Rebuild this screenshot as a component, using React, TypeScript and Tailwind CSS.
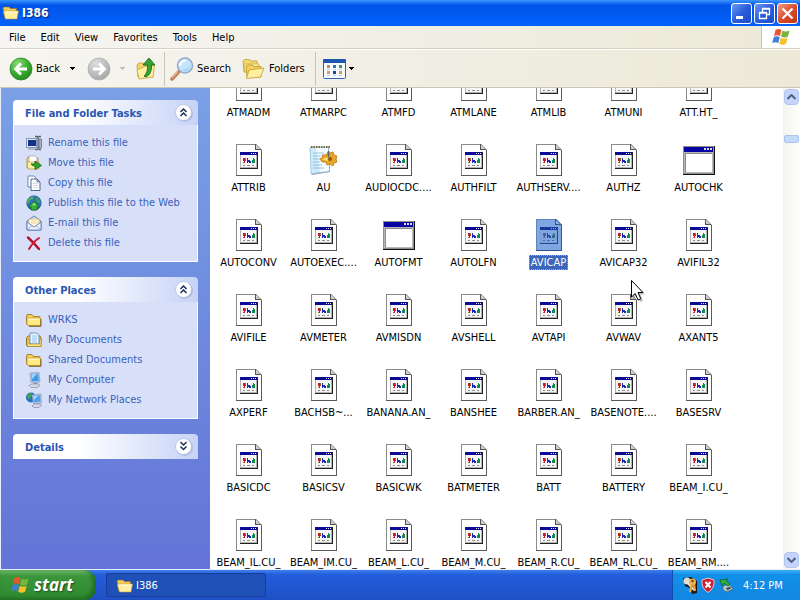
import { useState, type ReactNode } from "react"
import { clsx } from "clsx"

type FileKind = "doc" | "window" | "pad"

const fileNames = [
  "ATMADM", "ATMARPC", "ATMFD", "ATMLANE", "ATMLIB", "ATMUNI", "ATT.HT_",
  "ATTRIB", "AU", "AUDIOCDC....", "AUTHFILT", "AUTHSERV....", "AUTHZ", "AUTOCHK",
  "AUTOCONV", "AUTOEXEC....", "AUTOFMT", "AUTOLFN", "AVICAP", "AVICAP32", "AVIFIL32",
  "AVIFILE", "AVMETER", "AVMISDN", "AVSHELL", "AVTAPI", "AVWAV", "AXANT5",
  "AXPERF", "BACHSB~...", "BANANA.AN_", "BANSHEE", "BARBER.AN_", "BASENOTE....", "BASESRV",
  "BASICDC", "BASICSV", "BASICWK", "BATMETER", "BATT", "BATTERY", "BEAM_I.CU_",
  "BEAM_IL.CU_", "BEAM_IM.CU_", "BEAM_L.CU_", "BEAM_M.CU_", "BEAM_R.CU_", "BEAM_RL.CU_", "BEAM_RM....",
]

const kinds: Record<string, FileKind> = { AU: "pad", AUTOCHK: "window", AUTOFMT: "window" }

function DocIcon({ selected }: { selected: boolean }) {
  const paper = selected ? "#7ea6e0" : "#ffffff"
  return (
    <svg width="32" height="32" viewBox="0 0 32 32" shapeRendering="crispEdges">
      <path d="M3 0H23L29 6V32H3Z" fill={paper} />
      <path d="M3 0H23V1H4V31H3Z" fill={selected ? "#6684b4" : "#8a8a8a"} />
      <path d="M28 6H29V32H3V31H28Z" fill={selected ? "#35558c" : "#5a5a5a"} />
      <path d="M22 0H23V5H28V6H22Z" fill={selected ? "#35558c" : "#555555"} />
      <path d="M23 0L29 6H28L23 1Z" fill={selected ? "#35558c" : "#666666"} shapeRendering="auto" />
      <path d="M23 2L26.500 5H23Z" fill={selected ? "#93b5e8" : "#c8c8c8"} shapeRendering="auto" />
      <rect x="7" y="8" width="18" height="17" fill={selected ? "#254a8c" : "#222222"} />
      <rect x="7" y="8" width="17" height="16" fill={selected ? "#7b9cd0" : "#b4b4b4"} />
      <rect x="8" y="11" width="15" height="12" fill={selected ? "#7ea6e0" : "#f6f6f6"} />
      <rect x="7" y="8" width="17" height="3" fill={selected ? "#163a9c" : "#0a0a96"} />
      <path d="M18 9H19V10H18ZM20 9H21V10H20ZM22 9H23V10H22Z" fill={selected ? "#9dbcf0" : "#e8e8e8"} />
      <path d="M10 14H13V17H12V19H11V17H10Z" fill={selected ? "#4a5f9c" : "#c41a2a"} />
      <path d="M12 14H13V16H12ZM10 18H11V19H10Z" fill={selected ? "#4a5f9c" : "#8a7a10"} />
      <path d="M14 14H15V16H17V17H18V19H16V18H15V19H14Z" fill={selected ? "#2349a0" : "#1c26b8"} />
      <path d="M20 14H21V15H22V19H19V16H20Z" fill={selected ? "#2f6a8c" : "#0e8a4a"} />
      <path d="M10 21H12V22H10ZM14 21H17V22H14ZM19 21H21V22H19Z" fill={selected ? "#4a6eae" : "#8c8c8c"} />
    </svg>
  )
}

function WindowIcon() {
  return (
    <svg width="32" height="32" viewBox="0 0 32 32" shapeRendering="crispEdges">
      <rect x="0" y="2" width="32" height="29" fill="#111111" />
      <rect x="0" y="2" width="31" height="28" fill="#8e8e8e" />
      <rect x="1" y="3" width="29" height="5" fill="#0804a4" />
      <path d="M21 4H23V6H21ZM24 4H26V6H24ZM27 4H29V6H27Z" fill="#dcdcdc" />
      <rect x="1" y="8" width="29" height="21" fill="#b8b8b8" />
      <rect x="2" y="9" width="27" height="19" fill="#8a8a8a" />
      <rect x="3" y="10" width="26" height="18" fill="#ffffff" />
    </svg>
  )
}

function PadIcon() {
  return (
    <svg width="32" height="32" viewBox="0 0 32 32">
      <path d="M2 3L21 3L22 28L4 31Z" fill="#9aa6b0" />
      <path d="M2 3L20 3L21 27L3 30Z" fill="#cfeafb" stroke="#7fb4d6" strokeWidth="0.600" />
      <path d="M8 4L20 4L21 27L12 28Z" fill="#f3fbff" />
      <path d="M5 9H16M5 12H13M5 15H12M5 18H12M5 21H14M5 24H16" stroke="#86b6de" strokeWidth="0.800" />
      <path d="M3 3H22" stroke="#7d6a3c" strokeWidth="2" strokeDasharray="1.500 1" />
      <path d="M20 8L22 9L25 8L26 11L29 12L28 15L29 18L26 19L25 22L22 20L19 21L18 18L14 18L12 15L15 13L14 11L18 11Z" fill="#e8a526" stroke="#b87a14" strokeWidth="0.800" />
      <circle cx="22" cy="15" r="2" fill="#8a5c14" />
      <path d="M20.500 7V13" stroke="#5b6470" strokeWidth="1.500" />
      <path d="M14 15.500L19 13L20 17Z" fill="#ffda70" />
    </svg>
  )
}

function FolderIcon() {
  return (
    <svg width="16" height="16" viewBox="0 0 16 16">
      <path d="M0.500 4Q0.500 2.500 2 2.500H6L7.500 4.500H13Q14 4.500 14 5.500V13.500H2.500L0.500 12Z" fill="#f4d166" stroke="#a9821f" />
      <path d="M1 6.500Q1 6 2 6H13.500Q14.500 6 14.500 7V13.500H3.500Q1.500 13.500 1 12Z" fill="#fdeb84" stroke="#b8922c" strokeWidth="0.700" />
      <path d="M3 14.300H15V7" fill="none" stroke="#6f5414" strokeWidth="0.900" />
      <path d="M2 7.200H13" stroke="#fffbd8" />
    </svg>
  )
}

function OpenFolder() {
  return (
    <svg width="18" height="16" viewBox="0 0 18 16" className="shrink-0">
      <path d="M1 3L2 2H7L8.500 3.500H14.500V13H3Z" fill="#f3cc5c" stroke="#96701a" strokeWidth="0.600" />
      <path d="M2 6H16.500L15 14H3.500L1.500 7Z" fill="#fff0a2" stroke="#c89b30" strokeWidth="0.600" />
      <path d="M3.500 7H15.500" stroke="#fffde4" />
    </svg>
  )
}

function FlagIcon({ size }: { size: number }) {
  return (
    <svg width={size} height={size} viewBox="0 0 20 20" className="shrink-0">
      <path d="M4.500 3Q7.500 1 10.500 3L9 9Q6 7.500 3 9Z" fill="#e9562c" />
      <path d="M11.500 3.500Q14.500 5.500 18.500 3.500L17 9.500Q13.500 11.500 10 9.500Z" fill="#76b63a" />
      <path d="M2.800 10Q5.800 8.500 8.800 10.200L7.200 16Q4.200 14.500 1.200 16Z" fill="#3f7fdc" />
      <path d="M9.800 10.700Q13.300 12.500 16.700 10.700L15 16.800Q11.500 18.800 8.200 16.800Z" fill="#f6c02c" />
    </svg>
  )
}

function RenameIcon() {
  return (
    <svg width="16" height="16" viewBox="0 0 16 16">
      <rect x="0.500" y="3.500" width="10" height="9" fill="#dfe6f2" stroke="#8898b4" />
      <rect x="2" y="5" width="8" height="6" fill="#12308c" />
      <path d="M9 1.500H11L12 2.500L13 1.500H15M9 14.500H11L12 13.500L13 14.500H15M12 2.500V13.500" stroke="#5a6474" strokeWidth="1.300" fill="none" />
      <rect x="13" y="4" width="2.500" height="9" fill="#a8b2c2" stroke="#48546a" strokeWidth="0.600" />
      <path d="M2 14H9" stroke="#7d8cab" />
    </svg>
  )
}

function MoveIcon() {
  return (
    <svg width="16" height="16" viewBox="0 0 16 16">
      <path d="M1 3L2 2H6L7 3H12V13H1Z" fill="#f7d96c" stroke="#a9821f" strokeWidth="0.700" />
      <path d="M3 1H9L11 3V8H3Z" fill="#ffffff" stroke="#8694ac" strokeWidth="0.600" />
      <path d="M1 7H13V14H2Z" fill="#fff0a0" stroke="#b8922c" strokeWidth="0.700" />
      <path d="M5 9Q6 11 9 11V14.500L15.500 10.500L9 6V8.500Q8 9 5 9Z" fill="#2fa52c" stroke="#145f14" strokeWidth="0.800" />
    </svg>
  )
}

function CopyIcon() {
  return (
    <svg width="16" height="16" viewBox="0 0 16 16">
      <path d="M2 1H8L10 3V12H2Z" fill="#ffffff" stroke="#5f7ba5" strokeWidth="0.900" />
      <path d="M5 4H11L14 7V15.500H5Z" fill="#ffffff" stroke="#3f5b86" strokeWidth="0.900" />
      <path d="M11 4V7H14Z" fill="#9db7dc" stroke="#3f5b86" strokeWidth="0.600" />
      <path d="M7 8.500H12M7 10.500H12M7 12.500H12" stroke="#c5daf2" strokeWidth="0.900" />
    </svg>
  )
}

function GlobeIcon() {
  return (
    <svg width="16" height="16" viewBox="0 0 16 16">
      <circle cx="8" cy="8" r="7.300" fill="#2c74bc" stroke="#1d4a80" strokeWidth="0.500" />
      <path d="M2 4Q5 1 8 1.500L7 4L4 5L3 8L1 8Z" fill="#4fb054" />
      <path d="M10 2Q14 4 14.800 8L12 8L10 5Z" fill="#3c9f58" />
      <path d="M8 6L13.500 12L11 12V15H5V12H2.500Z" fill="#37b338" stroke="#135e1b" strokeWidth="0.700" />
      <path d="M8 8L10 10.500L8 10L6 10.500Z" fill="#b4f0a4" />
    </svg>
  )
}

function MailIcon() {
  return (
    <svg width="16" height="16" viewBox="0 0 16 16">
      <path d="M1 6L8 1L15 6V15H1Z" fill="#d7e5fb" stroke="#5874a6" strokeWidth="0.900" />
      <path d="M3 4H13V9L8 12L3 9Z" fill="#fff9df" stroke="#d2a94e" strokeWidth="0.600" />
      <path d="M5 6H11M5 8H11" stroke="#e6cb8e" strokeWidth="0.800" />
      <path d="M1 7L8 12L15 7V15H1Z" fill="#e9f2ff" stroke="#5874a6" strokeWidth="0.800" />
      <path d="M1 15L6 10.500M15 15L10 10.500" stroke="#7f9ac6" strokeWidth="0.800" />
    </svg>
  )
}

function DeleteIcon() {
  return (
    <svg width="16" height="16" viewBox="0 0 16 16">
      <path d="M2 2.500Q7 7 13 14" stroke="#b3122f" strokeWidth="2.400" fill="none" strokeLinecap="round" />
      <path d="M13 3Q7 7 3 14" stroke="#cc1b36" strokeWidth="2" fill="none" strokeLinecap="round" />
    </svg>
  )
}

function DocumentsIcon() {
  return (
    <svg width="16" height="16" viewBox="0 0 16 16">
      <path d="M0.500 6L2 4H14L15 6V14.500H1.500L0.500 13Z" fill="#f3cc5c" stroke="#8f6a16" strokeWidth="0.900" />
      <path d="M4 1H10.500L13 3V12H4Z" fill="#e4f3ff" stroke="#5f86b4" strokeWidth="0.800" />
      <path d="M6 4H11M6 6H11M6 8H11M6 10H11" stroke="#8fc3ec" strokeWidth="0.900" />
      <path d="M1 7H3V12H13.500V7H15V14.500H1.500Z" fill="#fbe58a" stroke="#a47d1f" strokeWidth="0.600" />
    </svg>
  )
}

function ComputerIcon() {
  return (
    <svg width="16" height="16" viewBox="0 0 16 16">
      <path d="M4 1L13 0.500L14 10L5 10.500Z" fill="#b9c8de" stroke="#8a9cc0" strokeWidth="0.700" />
      <path d="M5 2L12 1.700L12.800 8.700L6 9.200Z" fill="#3f98e8" />
      <path d="M5.200 2.300L11 2L6 7Z" fill="#9cd4ff" />
      <path d="M8 10.500H11L11.500 12.500H7.500Z" fill="#8b9ab4" />
      <path d="M3 13.500L6 12H13L14 13.500L11 15.500H5Z" fill="#d4dbe8" stroke="#75809a" strokeWidth="0.600" />
    </svg>
  )
}

function NetworkIcon() {
  return (
    <svg width="16" height="16" viewBox="0 0 16 16">
      <circle cx="5" cy="5.500" r="5" fill="#2b70b8" />
      <path d="M1 4Q3 0.500 6 1L5 4L3 8Z" fill="#40a84b" />
      <path d="M6 3L15 2L15.500 11L7.500 11.500Z" fill="#b9c8de" stroke="#8a9cc0" strokeWidth="0.700" />
      <path d="M7 4L14 3.200L14.400 9.500L8.200 10.200Z" fill="#4aa3ec" />
      <path d="M7.200 4.200L12 3.700L8 8Z" fill="#a5dafe" />
      <path d="M6 14L8.500 12H14L15.500 13.500L12.500 15.500H8Z" fill="#d4dbe8" stroke="#75709a" strokeWidth="0.600" />
    </svg>
  )
}

function NavCircle({ forward = false }: { forward?: boolean }) {
  return (
    <svg width="24" height="24" viewBox="0 0 24 24" className="shrink-0">
      <defs>
        <radialGradient id={forward ? "navFwd" : "navBack"} cx="0.350" cy="0.250" r="0.850">
          <stop offset="0" stopColor={forward ? "#dedede" : "#8cdc74"} />
          <stop offset="0.550" stopColor={forward ? "#bdbdbd" : "#3bab31"} />
          <stop offset="1" stopColor={forward ? "#a3a3a3" : "#1f821d"} />
        </radialGradient>
      </defs>
      <circle cx="12" cy="12" r="11" fill={forward ? "url(#navFwd)" : "url(#navBack)"} stroke={forward ? "#b0b0b0" : "#2d8429"} strokeWidth="0.800" />
      <path d={forward ? "M6 12H17M12 6.500L17.500 12L12 17.500" : "M18 12H7M12 6.500L6.500 12L12 17.500"} stroke="#ffffff" strokeWidth="2.800" fill="none" />
    </svg>
  )
}

function UpFolderIcon() {
  return (
    <svg width="22" height="24" viewBox="0 0 22 24" className="shrink-0">
      <path d="M2 8L4 6H8L10 8H18V20H3Z" fill="#f4d46a" stroke="#c1982f" strokeWidth="0.800" />
      <path d="M2 13L11 9L19.500 8L18 20L4 22Z" fill="#fff0a4" stroke="#c9a136" strokeWidth="0.800" />
      <path d="M9 19Q13 16 12.500 8H8L14 1L20 8H16.500Q17 17 11 20Z" fill="#37a532" stroke="#176a1a" strokeWidth="0.900" />
    </svg>
  )
}

function SearchIcon() {
  return (
    <svg width="24" height="24" viewBox="0 0 24 24" className="shrink-0">
      <path d="M2 22L9 14.500" stroke="#c07a52" strokeWidth="3.400" strokeLinecap="round" />
      <path d="M2 21L8 14.500" stroke="#edb896" strokeWidth="1.200" />
      <circle cx="15" cy="8.500" r="7.500" fill="#c4e5fb" stroke="#90a8cc" strokeWidth="1.500" />
      <path d="M10 8Q11 4 15 3.500" stroke="#ffffff" strokeWidth="2.200" fill="none" strokeLinecap="round" />
      <path d="M12 12Q17 14 20 8Q20 14 15 14.500Z" fill="#9fd0f2" />
    </svg>
  )
}

function FoldersIcon() {
  return (
    <svg width="24" height="22" viewBox="0 0 24 22" className="shrink-0">
      <path d="M1 3L3 1.500H7L9 3H15V14H2Z" fill="#f4d873" stroke="#c19a35" strokeWidth="0.800" />
      <path d="M2 6H17L15 14H3Z" fill="#fdeea4" stroke="#c9a136" strokeWidth="0.600" />
      <path d="M4 8L6 7H10L12 8.500H19V19H5Z" fill="#f3d25e" stroke="#b88f2a" strokeWidth="0.800" />
      <path d="M7 12L22 10L18.500 19L4.500 20.500Z" fill="#fff0a0" stroke="#c59c31" strokeWidth="0.800" />
    </svg>
  )
}

function ViewsIcon() {
  return (
    <svg width="23" height="20" viewBox="0 0 23 20" className="shrink-0">
      <rect x="0.500" y="0.500" width="22" height="19" rx="1" fill="#f5faff" stroke="#2c64b4" />
      <rect x="0" y="0" width="23" height="4" rx="1" fill="#1d56ac" />
      <rect x="4" y="6" width="3" height="3" fill="#c9837a" />
      <rect x="10" y="6" width="3" height="3" fill="#3c6cb8" />
      <rect x="16" y="6" width="3" height="3" fill="#3c9a4c" />
      <rect x="4" y="12" width="3" height="3" fill="#e29a62" />
      <rect x="10" y="12" width="3" height="3" fill="#1a468c" />
      <rect x="16" y="12" width="3" height="3" fill="#d79a4c" />
      <path d="M4 10.500H7M10 10.500H13M16 10.500H19M4 16.500H7M10 16.500H13M16 16.500H19" stroke="#c4cede" />
    </svg>
  )
}

function Caret({ muted = false }: { muted?: boolean }) {
  return (
    <svg width="5" height="3" viewBox="0 0 5 3" className="shrink-0" shapeRendering="crispEdges">
      <path d="M0 0H5V1H4V2H3V3H2V2H1V1H0Z" fill={muted ? "#bdbdb4" : "#000000"} />
    </svg>
  )
}

function Chevrons({ down = false }: { down?: boolean }) {
  return (
    <svg width="20" height="20" viewBox="0 0 20 20">
      <circle cx="10.500" cy="10.500" r="8.500" fill="#9ba9d6" opacity="0.600" />
      <circle cx="9.500" cy="9.500" r="8" fill="#ffffff" stroke="#b3bde0" strokeWidth="0.800" />
      <path
        d={down ? "M6.500 5L9.500 8L12.500 5M6.500 9.500L9.500 12.500L12.500 9.500" : "M6.500 9L9.500 6L12.500 9M6.500 13L9.500 10L12.500 13"}
        stroke="#1c2c5c"
        strokeWidth="1.500"
        fill="none"
      />
    </svg>
  )
}

function ScrollButton({ down = false }: { down?: boolean }) {
  return (
    <button
      type="button"
      aria-label={down ? "Scroll down" : "Scroll up"}
      className="flex h-4 w-full items-center justify-center rounded-sm border border-[#b2c4f0] bg-[#c5d4fb]"
    >
      <svg width="9" height="6" viewBox="0 0 9 6">
        <path d={down ? "M0.500 1L4.500 5L8.500 1" : "M0.500 5L4.500 1L8.500 5"} stroke="#4d6185" strokeWidth="2" fill="none" />
      </svg>
    </button>
  )
}

type PanelItem = { label: string; icon: ReactNode }

const tasks: PanelItem[] = [
  { label: "Rename this file", icon: <RenameIcon /> },
  { label: "Move this file", icon: <MoveIcon /> },
  { label: "Copy this file", icon: <CopyIcon /> },
  { label: "Publish this file to the Web", icon: <GlobeIcon /> },
  { label: "E-mail this file", icon: <MailIcon /> },
  { label: "Delete this file", icon: <DeleteIcon /> },
]

const places: PanelItem[] = [
  { label: "WRKS", icon: <FolderIcon /> },
  { label: "My Documents", icon: <DocumentsIcon /> },
  { label: "Shared Documents", icon: <FolderIcon /> },
  { label: "My Computer", icon: <ComputerIcon /> },
  { label: "My Network Places", icon: <NetworkIcon /> },
]

function Panel({ title, items }: { title: string; items?: PanelItem[] }) {
  return (
    <section>
      <div className="flex h-[25px] items-center justify-between rounded-t-sm bg-linear-to-r from-white from-35% to-[#c6d3f7] pr-1 pl-3">
        <h2 className="pt-[3px] font-bold text-[#2a56b4]">{title}</h2>
        <button type="button" aria-label={`Toggle ${title}`}>
          <Chevrons down={!items} />
        </button>
      </div>
      {items && (
        <ul className="border border-t-0 border-white bg-[#d8e0f9] pt-2 pb-2 pl-3">
          {items.map((item) => (
            <li key={item.label}>
              <a href="#" className="flex h-5 items-center gap-[6px] text-[#3a60bc]">
                {item.icon}
                {item.label}
              </a>
            </li>
          ))}
        </ul>
      )}
    </section>
  )
}

function FileItem({ name, selected, onSelect }: { name: string; selected: boolean; onSelect: () => void }) {
  const kind = kinds[name] ?? "doc"
  return (
    <button type="button" onClick={onSelect} className="flex h-[75px] flex-col items-center gap-1 whitespace-nowrap">
      {kind === "doc" && <DocIcon selected={selected} />}
      {kind === "window" && <WindowIcon />}
      {kind === "pad" && <PadIcon />}
      <span
        className={clsx(
          "border border-dotted px-px leading-[13px]",
          selected ? "border-[#d8a05c] bg-[#3a66bc] text-white" : "border-transparent"
        )}
      >
        {name}
      </span>
    </button>
  )
}

export default function App() {
  const [selected, setSelected] = useState("AVICAP")

  return (
    <div className="relative flex h-screen flex-col overflow-hidden bg-white font-['DejaVu_Sans_Condensed','DejaVu_Sans',sans-serif] text-[11px] leading-4 text-black">
      <header className="flex h-[26px] shrink-0 items-center justify-between bg-linear-to-b from-[#3c94fc] via-[#0054e8] via-20% to-[#0262fc] pr-[2px] pl-[2px]">
        <div className="flex items-center gap-[2px]">
          <OpenFolder />
          <h1 className="text-[12px] font-bold text-white [text-shadow:1px_1px_1px_#0a2a80]">I386</h1>
        </div>
        <div className="flex gap-[2px]">
          <button type="button" aria-label="Minimize" className="size-[21px] rounded-[3px] border border-white bg-linear-to-br from-[#6f98f0] via-[#2a5cdc] to-[#1c4cc8]">
            <svg viewBox="0 0 19 19">
              <rect x="4" y="12" width="7" height="3" fill="#ffffff" />
            </svg>
          </button>
          <button type="button" aria-label="Restore" className="size-[21px] rounded-[3px] border border-white bg-linear-to-br from-[#6f98f0] via-[#2a5cdc] to-[#1c4cc8]">
            <svg viewBox="0 0 19 19">
              <path d="M7.500 8V4.500H14.500V10.500H11.500M7 5H15" stroke="#ffffff" fill="none" strokeWidth="1.300" />
              <path d="M4.500 8.500H11.500V14.500H4.500ZM4 9H12" stroke="#ffffff" fill="none" strokeWidth="1.300" />
            </svg>
          </button>
          <button type="button" aria-label="Close" className="size-[21px] rounded-[3px] border border-white bg-linear-to-br from-[#f09a80] via-[#dc4c2c] to-[#c03410]">
            <svg viewBox="0 0 19 19">
              <path d="M4.500 4.500L14.500 14.500M14.500 4.500L4.500 14.500" stroke="#ffffff" strokeWidth="2.200" />
            </svg>
          </button>
        </div>
      </header>

      <div className="flex h-[23px] shrink-0 justify-between border-b border-[#d4d0bf] bg-linear-to-r from-[#f6f5f1] to-[#ece9d8]">
        <nav className="flex items-center gap-[15px] pt-px pl-[9px]">
          {["File", "Edit", "View", "Favorites", "Tools", "Help"].map((item) => (
            <button key={item} type="button">
              {item}
            </button>
          ))}
        </nav>
        <div className="flex w-[39px] items-center justify-center border-l border-[#c9c5b2] bg-white">
          <FlagIcon size={20} />
        </div>
      </div>

      <div className="flex h-[39px] shrink-0 items-center border-t border-b border-t-white border-b-[#cbc7b4] bg-linear-to-r from-[#f6f5f0] to-[#ece9d8] pl-[9px]">
        <button type="button" className="flex w-[66px] items-center gap-[3px]">
          <NavCircle />
          <span className="flex-1 text-left">Back</span>
          <Caret />
        </button>
        <button type="button" aria-label="Forward" className="ml-3 flex items-center gap-[9px]">
          <NavCircle forward />
          <Caret muted />
        </button>
        <button type="button" aria-label="Up" className="ml-[10px]">
          <UpFolderIcon />
        </button>
        <div className="ml-[7px] h-[34px] w-px bg-[#c9c5b2]" />
        <button type="button" className="ml-[5px] flex w-[62px] items-center gap-[3px]">
          <SearchIcon />
          Search
        </button>
        <button type="button" className="ml-[10px] flex w-[64px] items-center gap-[3px]">
          <FoldersIcon />
          Folders
        </button>
        <div className="ml-[9px] h-[34px] w-px bg-[#c9c5b2]" />
        <button type="button" aria-label="Views" className="ml-[7px] flex items-center gap-[3px]">
          <ViewsIcon />
          <Caret />
        </button>
      </div>

      <div className="flex min-h-0 flex-1 border-b border-l border-[#e8eefc]">
        <aside className="flex w-[209px] shrink-0 flex-col gap-[15px] bg-linear-to-b from-[#7ba0e6] to-[#6374d6] px-3 pt-3">
          <Panel title="File and Folder Tasks" items={tasks} />
          <Panel title="Other Places" items={places} />
          <Panel title="Details" />
        </aside>
        <main className="min-w-0 flex-1 overflow-hidden pl-px">
          <div className="-mt-5 grid grid-cols-[repeat(auto-fill,75px)] pt-px">
            {fileNames.map((name) => (
              <FileItem key={name} name={name} selected={name === selected} onSelect={() => setSelected(name)} />
            ))}
          </div>
        </main>
        <div className="flex w-[17px] shrink-0 flex-col justify-between bg-linear-to-r from-[#f3f3ef] to-[#fefefb] py-px pr-px pl-px">
          <div className="flex flex-col gap-[30px]">
            <ScrollButton />
            <div className="h-2 rounded-[2px] border border-[#a9c3ea] bg-[#c4dafa]" />
          </div>
          <ScrollButton down />
        </div>
      </div>

      <footer className="flex h-[30px] shrink-0 items-stretch bg-linear-to-b from-[#3f80ee] via-[#245edb] via-15% to-[#1f4fc4] text-white">
        <button
          type="button"
          className="flex w-24 items-center gap-1 rounded-r-xl bg-linear-to-b from-[#6cb868] via-[#3a963a] via-20% to-[#2f8a30] pl-[10px] font-['Open_Sans','Noto_Sans',sans-serif] text-[17px] font-bold italic shadow-[inset_-3px_-2px_4px_#1f6a22] [text-shadow:1px_1px_2px_#1d4a1d]"
        >
          <FlagIcon size={20} />
          start
        </button>
        <button
          type="button"
          className="my-[3px] ml-[10px] flex w-40 items-center gap-[2px] rounded-[2px] border border-[#183c98] bg-[#1e50b8] pt-px pl-[9px]"
        >
          <OpenFolder />
          I386
        </button>
        <div className="ml-auto flex w-32 items-center border-l border-[#0c4fb0] bg-linear-to-b from-[#3cb0f8] via-[#1290e8] via-15% to-[#1187e2] pl-[9px]">
          <svg width="16" height="18" viewBox="0 0 16 18">
            <path d="M1 2L9 1L15 5V17L10 18L8 12L3 10Z" fill="#14181c" />
            <circle cx="5" cy="5" r="3.500" fill="#dcdcd4" />
            <path d="M5 6L12 14" stroke="#e8e4dc" strokeWidth="2" />
            <circle cx="10.500" cy="6" r="3.500" fill="#f0b04c" />
            <path d="M10 8L8 16M12 8L13 15" stroke="#f3a43c" strokeWidth="2.200" />
            <circle cx="10.500" cy="5" r="1.200" fill="#6a4410" />
          </svg>
          <svg width="14" height="16" viewBox="0 0 14 16" className="ml-[3px]">
            <path d="M7 1L13 3Q14 11 7 15.500Q0 11 1 3Z" fill="#cc2032" stroke="#e6c3cc" />
            <path d="M4.500 5L9.500 10.500M9.500 5L4.500 10.500" stroke="#ffffff" strokeWidth="2" />
          </svg>
          <svg width="14" height="16" viewBox="0 0 14 16" className="ml-1">
            <path d="M4 9L10 7L14 12L8 15L4 13Z" fill="#b8c8c8" stroke="#4c646c" strokeWidth="0.800" />
            <path d="M7 11L11 9.500L12 11.500L8 13.500Z" fill="#3c5a60" />
            <path d="M1 3L9 2L7 4L11 7L9 9L5 6L3 9Z" fill="#34b43c" stroke="#136018" strokeWidth="0.800" />
          </svg>
          <time className="ml-[10px] pt-px">4:12 PM</time>
        </div>
      </footer>

      {/* mouse pointer */}
      <svg width="16" height="24" viewBox="0 0 16 24" className="pointer-events-none absolute top-[279px] left-[630px]">
        <path d="M3 3V20L7 16L10 23L13 22L10.500 15.500H15Z" fill="#000000" opacity="0.250" />
        <path d="M1.500 1.500V18L5.200 14.500L8 21L10.800 19.800L8 13.500H13Z" fill="#ffffff" stroke="#000000" />
      </svg>
    </div>
  )
}
